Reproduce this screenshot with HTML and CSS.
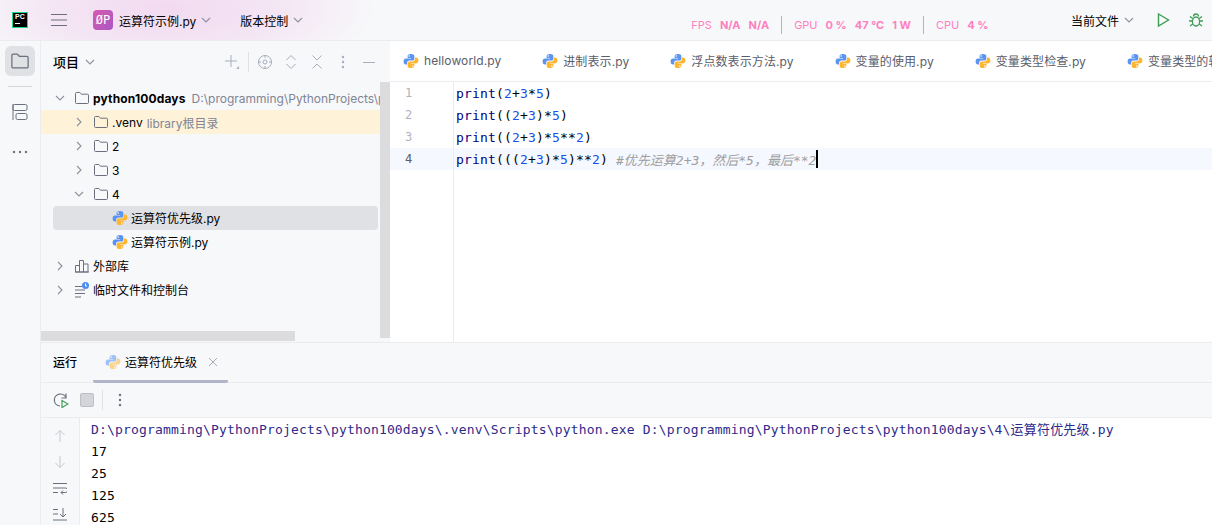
FILE: index.html
```html
<!DOCTYPE html>
<html lang="en">
<head>
  <meta charset="UTF-8" />
  <title>运算符示例.py</title>
  <link rel="stylesheet" href="styles.css">
</head>
<body>
  <svg class="defs" width="0" height="0">
    <symbol id="py" viewBox="0 0 16 16">
      <path fill="#5b94f0" d="M8 1C5.300 1 4.600 2 4.600 3.200V5h3.600v.6H2.900C1.500 5.600 .6 6.700 .6 8.400c0 1.800.9 3 2.300 3h1.200V9.700c0-1.200 1-2.200 2.200-2.200h3.200c1 0 1.800-.8 1.800-1.800V3.100C11.300 1.800 10.200 1 8 1z"/>
      <circle cx="6.200" cy="3" r=".8" fill="#fff"/>
      <path fill="#ffb62e" d="M8 15c2.700 0 3.400-1 3.400-2.200V11H7.800v-.6h5.300c1.400 0 2.300-1.100 2.300-2.800 0-1.800-.9-3-2.300-3h-1.200v1.700c0 1.200-1 2.200-2.200 2.200H6.500c-1 0-1.800.8-1.800 1.800v2.600C4.700 14.200 5.800 15 8 15z"/>
      <circle cx="9.800" cy="13" r=".8" fill="#fff"/>
    </symbol>
    <symbol id="folder" viewBox="0 0 16 16">
      <path fill="none" stroke="#6c707e" d="M1.500 3.500a1 1 0 0 1 1-1h3.300l1.700 1.700h6a1 1 0 0 1 1 1v7.300a1 1 0 0 1-1 1h-11a1 1 0 0 1-1-1z"/>
    </symbol>
    <symbol id="right" viewBox="0 0 10 10">
      <path fill="none" stroke="#8d919e" stroke-width="1.100" d="M3 1l4 4-4 4"/>
    </symbol>
    <symbol id="down" viewBox="0 0 10 10">
      <path fill="none" stroke="#8d919e" stroke-width="1.100" d="M1 3l4 4 4-4"/>
    </symbol>
  </svg>

  <header class="titlebar">
    <div class="logo"><span>PC</span><i></i></div>
    <svg class="burger" width="16" height="14" viewBox="0 0 16 14"><path stroke="#6c707e" d="M0 1.500h16M0 7h16M0 12.500h16"/></svg>
    <div class="badge">ØP</div>
    <span class="title-item">运算符示例.py</span>
    <svg class="chev" width="10" height="10"><use href="#down"/></svg>
    <span class="title-item vcs">版本控制</span>
    <svg class="chev" width="10" height="10"><use href="#down"/></svg>

    <div class="stats">
      <span>FPS</span><b>N/A</b><b>N/A</b><em></em>
      <span>GPU</span><b>0 %</b><b>47 °C</b><b>1 W</b><em></em>
      <span>CPU</span><b>4 %</b>
    </div>

    <div class="run-area">
      <span class="title-item">当前文件</span>
      <svg class="chev" width="10" height="10"><use href="#down"/></svg>
      <svg class="run-btn" width="16" height="16" viewBox="0 0 16 16"><path fill="none" stroke="#3f9c57" stroke-width="1.400" d="M3.500 2l10 6-10 6z"/></svg>
      <svg class="debug-btn" width="16" height="16" viewBox="0 0 16 16"><g fill="none" stroke="#3f9c57" stroke-width="1.300"><ellipse cx="8" cy="9.500" rx="3.600" ry="4.500"/><path d="M5.500 4.500a2.500 2.500 0 0 1 5 0M4.500 9H1M15 9h-3.500M4.800 12l-2.800 2M11.200 12l2.800 2M4.800 6.500L2 4.500M11.200 6.500L14 4.500"/></g></svg>
    </div>
  </header>

  <div class="main">
    <nav class="rail">
      <div class="rail-active"><svg width="20" height="20"><use href="#folder"/></svg></div>
      <div class="rail-sep"></div>
      <svg class="rail-icon" width="16" height="18" viewBox="0 0 16 18"><g fill="none" stroke="#6c707e"><path d="M1 1v16"/><rect x="1" y="1.500" width="14" height="6" rx="1.500"/><rect x="4" y="10.500" width="11" height="6" rx="1.500"/></g></svg>
      <svg class="rail-icon dots" width="16" height="4" viewBox="0 0 16 4"><g fill="#6c707e"><circle cx="2" cy="2" r="1.200"/><circle cx="8" cy="2" r="1.200"/><circle cx="14" cy="2" r="1.200"/></g></svg>
    </nav>

    <div class="workspace">
      <div class="upper">
        <section class="project">
          <div class="project-head">
            <span class="project-title">项目</span>
            <svg class="chev" width="10" height="10"><use href="#down"/></svg>
            <div class="project-tools">
              <svg width="16" height="16" viewBox="0 0 16 16"><path stroke="#a8adbd" fill="none" d="M7 1v12M1 7h12"/><path fill="#a8adbd" d="M15 12v3h-3z"/></svg>
              <i class="tool-sep"></i>
              <svg width="16" height="16" viewBox="0 0 16 16"><g stroke="#a8adbd" fill="none"><circle cx="8" cy="8" r="6.500"/><circle cx="8" cy="8" r="2"/><path d="M8 1v3M8 12v3M1 8h3M12 8h3"/></g></svg>
              <svg width="16" height="16" viewBox="0 0 16 16"><path stroke="#a8adbd" fill="none" d="M3.500 6L8 1.500 12.500 6M3.500 10L8 14.500 12.500 10"/></svg>
              <svg width="16" height="16" viewBox="0 0 16 16"><path stroke="#a8adbd" fill="none" d="M3.500 1.500L8 6l4.500-4.500M3.500 14.500L8 10l4.500 4.500"/></svg>
              <svg width="16" height="16" viewBox="0 0 16 16"><g fill="#a8adbd"><circle cx="8" cy="3" r="1.200"/><circle cx="8" cy="8" r="1.200"/><circle cx="8" cy="13" r="1.200"/></g></svg>
              <svg width="16" height="16" viewBox="0 0 16 16"><path stroke="#a8adbd" d="M2 8.500h12"/></svg>
            </div>
          </div>

          <div class="tree">
            <div class="row lvl0">
              <svg class="arrow" width="10" height="10"><use href="#down"/></svg>
              <svg class="icon" width="16" height="16"><use href="#folder"/></svg>
              <b class="root-name">python100days</b><span class="hint">D:\programming\PythonProjects\python100days</span>
            </div>
            <div class="row lvl1 library">
              <svg class="arrow" width="10" height="10"><use href="#right"/></svg>
              <svg class="icon" width="16" height="16"><use href="#folder"/></svg>
              <span>.venv</span><span class="hint">library根目录</span>
            </div>
            <div class="row lvl1">
              <svg class="arrow" width="10" height="10"><use href="#right"/></svg>
              <svg class="icon" width="16" height="16"><use href="#folder"/></svg>
              <span>2</span>
            </div>
            <div class="row lvl1">
              <svg class="arrow" width="10" height="10"><use href="#right"/></svg>
              <svg class="icon" width="16" height="16"><use href="#folder"/></svg>
              <span>3</span>
            </div>
            <div class="row lvl1">
              <svg class="arrow" width="10" height="10"><use href="#down"/></svg>
              <svg class="icon" width="16" height="16"><use href="#folder"/></svg>
              <span>4</span>
            </div>
            <div class="row lvl2 selected">
              <svg class="icon" width="16" height="16"><use href="#py"/></svg>
              <span class="cjk">运算符优先级.py</span>
            </div>
            <div class="row lvl2">
              <svg class="icon" width="16" height="16"><use href="#py"/></svg>
              <span class="cjk">运算符示例.py</span>
            </div>
            <div class="row lvl0">
              <svg class="arrow" width="10" height="10"><use href="#right"/></svg>
              <svg class="icon" width="16" height="16" viewBox="0 0 16 16"><path fill="none" stroke="#6c707e" d="M1.500 14V7.500h4V14zM5.500 14V2.500h4V14zM9.500 14V6h4.500v8zM1 14h14"/></svg>
              <span class="cjk">外部库</span>
            </div>
            <div class="row lvl0">
              <svg class="arrow" width="10" height="10"><use href="#right"/></svg>
              <svg class="icon" width="16" height="16" viewBox="0 0 16 16"><path stroke="#6c707e" d="M1 4.500h7M1 8h10M1 11.500h10M1 15h6"/><circle cx="11.500" cy="3.500" r="3.500" fill="#4d8cf5"/><path stroke="#fff" d="M11.500 1.500v2.500h1.500" fill="none"/></svg>
              <span class="cjk">临时文件和控制台</span>
            </div>
          </div>
          <div class="vscroll"></div>
          <div class="hscroll"></div>
        </section>

        <section class="editor">
          <div class="tabs">
            <div class="tab"><svg width="16" height="16"><use href="#py"/></svg>helloworld.py</div>
            <div class="tab"><svg width="16" height="16"><use href="#py"/></svg>进制表示.py</div>
            <div class="tab"><svg width="16" height="16"><use href="#py"/></svg>浮点数表示方法.py</div>
            <div class="tab"><svg width="16" height="16"><use href="#py"/></svg>变量的使用.py</div>
            <div class="tab"><svg width="16" height="16"><use href="#py"/></svg>变量类型检查.py</div>
            <div class="tab"><svg width="16" height="16"><use href="#py"/></svg>变量类型的转换.py</div>
          </div>
          <div class="code">
            <div class="line"><span class="num">1</span><code><s>print</s>(<u>2</u>+<u>3</u>*<u>5</u>)</code></div>
            <div class="line"><span class="num">2</span><code><s>print</s>((<u>2</u>+<u>3</u>)*<u>5</u>)</code></div>
            <div class="line"><span class="num">3</span><code><s>print</s>((<u>2</u>+<u>3</u>)*<u>5</u>**<u>2</u>)</code></div>
            <div class="line current"><span class="num">4</span><code><s>print</s>(((<u>2</u>+<u>3</u>)*<u>5</u>)**<u>2</u>) <i>#优先运算2+3，然后*5，最后**2</i><span class="caret"></span></code></div>
            <div class="gutter-rest"></div>
          </div>
        </section>
      </div>

      <section class="run-panel">
        <div class="run-head">
          <span class="run-label">运行</span>
          <div class="run-tab">
            <svg class="faded" width="16" height="16"><use href="#py"/></svg>
            <span>运算符优先级</span>
            <svg width="10" height="10" viewBox="0 0 10 10"><path stroke="#a8adbd" d="M1 1l8 8M9 1l-8 8"/></svg>
          </div>
        </div>
        <div class="run-tools">
          <svg width="16" height="16" viewBox="0 0 16 16"><path fill="none" stroke="#6c707e" stroke-width="1.200" d="M7 14A6 6 0 1 1 13 6M13 1.500V6H8.500"/><path fill="#fff" stroke="#3f9c57" stroke-width="1.200" d="M9 8.500l6 3.500-6 3.500z"/></svg>
          <div class="stop"></div>
          <i class="tool-sep"></i>
          <svg width="16" height="16" viewBox="0 0 16 16"><g fill="#6c707e"><circle cx="8" cy="3" r="1.200"/><circle cx="8" cy="8" r="1.200"/><circle cx="8" cy="13" r="1.200"/></g></svg>
        </div>
        <div class="console-wrap">
          <div class="console-side">
            <svg width="14" height="14" viewBox="0 0 14 14"><path fill="none" stroke="#c4c7d0" d="M7 13V1.500M2.500 6L7 1.500 11.500 6"/></svg>
            <svg width="14" height="14" viewBox="0 0 14 14"><path fill="none" stroke="#c4c7d0" d="M7 1v11.500M2.500 8L7 12.500 11.500 8"/></svg>
            <svg width="14" height="14" viewBox="0 0 14 14"><path fill="none" stroke="#6c707e" d="M0 2.500h14M0 7h12.500a2 2 0 0 1 0 4.500H8M10 9.500l-2 2 2 2M0 11.500h5"/></svg>
            <svg width="14" height="14" viewBox="0 0 14 14"><path fill="none" stroke="#6c707e" d="M0 2.500h5M0 7h5M0 13h14M10 1v9M7 7l3 3 3-3"/></svg>
          </div>
          <pre class="console"><span class="cmd">D:\programming\PythonProjects\python100days\.venv\Scripts\python.exe D:\programming\PythonProjects\python100days\4\运算符优先级.py</span>
17
25
125
625</pre>
        </div>
      </section>
    </div>
  </div>
</body>
</html>
```

FILE: styles.css
```css
/* IDE window */
html, body {
  height: 100%;
}
body {
  margin: 0;
  display: flex;
  flex-direction: column;
  overflow: hidden;
  background-color: #fff;
  color: #000;
  font-family: Inter, "Noto Sans CJK SC", sans-serif;
  font-size: 13px;
}
.defs {
  position: absolute;
}
svg {
  display: block;
  flex: none;
}

/* title bar */
.titlebar {
  height: 41px;
  flex: none;
  display: flex;
  align-items: center;
  box-sizing: border-box;
  padding-left: 12px;
  border-bottom: 1px solid #ebecf0;
  background: radial-gradient(ellipse 210px 70px at 165px 10px, #f2daf1 0%, #f4e6f4 55%, rgba(247, 248, 250, 0) 100%), #f7f8fa;
}
.logo {
  width: 16px;
  height: 16px;
  box-sizing: border-box;
  border: 1px solid #21d789;
  background-color: #000;
  color: #fff;
  font-family: "Liberation Sans", sans-serif;
  font-size: 7px;
  font-weight: bold;
  line-height: 8px;
  padding-left: 2px;
}
.logo span {
  display: block;
}
.logo i {
  display: block;
  width: 5px;
  height: 1px;
  margin-top: 2px;
  background-color: #fff;
}
.burger {
  margin-left: 23px;
}
.badge {
  width: 20px;
  height: 20px;
  margin-left: 26px;
  border-radius: 4px;
  background: linear-gradient(135deg, #d65ab0, #a957c4);
  color: #fff;
  font-family: "DejaVu Sans Mono", monospace;
  font-size: 12px;
  line-height: 20px;
  text-align: center;
}
.title-item {
  font-size: 12px;
  margin-left: 6px;
}
.title-item.vcs {
  margin-left: 29px;
}
.chev {
  margin-left: 5px;
}
.stats {
  display: flex;
  align-items: center;
  margin-left: 388px;
  margin-top: 10px;
  gap: 8px;
  color: #ff7fbf;
  font-size: 11px;
  height: 18px;
}
.stats b {
  font-weight: 700;
}
.stats em {
  width: 1px;
  height: 18px;
  margin: 0 4px;
  background-color: #ff8cc6;
}
.run-area {
  display: flex;
  align-items: center;
  margin-left: auto;
  padding-right: 8px;
}
.run-btn {
  margin-left: 21px;
}
.debug-btn {
  margin-left: 17px;
}

/* main area */
.main {
  flex: 1;
  min-height: 0;
  display: flex;
}
.rail {
  width: 41px;
  flex: none;
  box-sizing: border-box;
  border-right: 1px solid #ebecf0;
  background-color: #f7f8fa;
  display: flex;
  flex-direction: column;
  align-items: center;
  padding-top: 5px;
}
.rail-active {
  width: 30px;
  height: 30px;
  border-radius: 6px;
  background-color: #dfe1e5;
  display: flex;
  align-items: center;
  justify-content: center;
}
.rail-sep {
  width: 24px;
  height: 1px;
  margin-top: 10px;
  background-color: #d3d5db;
}
.rail-icon {
  margin-top: 16px;
}
.rail-icon.dots {
  margin-top: 29px;
}
.workspace {
  flex: 1;
  min-width: 0;
  display: flex;
  flex-direction: column;
}
.upper {
  height: 301px;
  flex: none;
  display: flex;
}

/* project tree */
.project {
  position: relative;
  width: 349px;
  flex: none;
  background-color: #f7f8fa;
  overflow: hidden;
}
.project-head {
  height: 41px;
  display: flex;
  align-items: center;
  padding-left: 12px;
}
.project-title {
  font-weight: 500;
}
.project-head .chev {
  margin-left: 6px;
}
.project-tools {
  display: flex;
  align-items: center;
  gap: 10px;
  margin-left: auto;
  padding-right: 13px;
}
.tool-sep {
  width: 1px;
  height: 20px;
  margin: 0 -2px;
  background-color: #dfe1e5;
}
.tree {
  padding-top: 4px;
}
.row {
  height: 24px;
  display: flex;
  align-items: center;
  white-space: nowrap;
  font-size: 12px;
  box-sizing: border-box;
}
.row .arrow {
  margin-right: 9px;
}
.row .icon {
  margin-right: 3px;
}
.row .cjk {
  margin-bottom: 2px;
}
.lvl0 {
  padding-left: 14px;
}
.lvl1 {
  padding-left: 33px;
}
.lvl2 {
  padding-left: 71px;
}
.library {
  background-color: #fef3d9;
}
.selected {
  background-color: #dfe1e5;
  border-radius: 4px;
  margin: 0 12px;
  padding-left: 59px;
}
.root-name {
  font-weight: 700;
  letter-spacing: .15px;
}
.hint {
  color: #818594;
  margin-left: 6px;
}
.library .hint {
  margin-left: 4px;
}
.vscroll {
  position: absolute;
  top: 41px;
  right: 0;
  bottom: 4px;
  width: 10px;
  background-color: #dcdcde;
}
.hscroll {
  position: absolute;
  left: 0;
  bottom: 1px;
  width: 254px;
  height: 10px;
  background-color: #dcdcde;
}

/* editor */
.editor {
  flex: 1;
  min-width: 0;
  display: flex;
  flex-direction: column;
  overflow: hidden;
}
.tabs {
  height: 41px;
  flex: none;
  display: flex;
  align-items: center;
  box-sizing: border-box;
  border-bottom: 1px solid #ebecf0;
  padding-left: 13px;
  gap: 41px;
  white-space: nowrap;
  color: #5a5d6b;
  font-size: 12px;
  letter-spacing: .1px;
}
.tab {
  display: flex;
  align-items: center;
  gap: 5px;
  padding-bottom: 2px;
}
.tab svg {
  margin-top: 2px;
}
.code {
  flex: 1;
  display: flex;
  flex-direction: column;
  font-family: "DejaVu Sans Mono", "Noto Sans CJK SC", monospace;
  font-size: 13px;
}
.line {
  height: 22px;
  display: flex;
  align-items: center;
}
.line.current {
  background-color: #f5f8fe;
}
.num {
  width: 64px;
  flex: none;
  box-sizing: border-box;
  padding-left: 15px;
  height: 100%;
  line-height: 22px;
  border-right: 1px solid #ebecf0;
  color: #aeb3c2;
  font-size: 12px;
}
.current .num {
  color: #5a5d6b;
}
.line code {
  font: inherit;
  margin-left: 2px;
  letter-spacing: .17px;
  white-space: pre;
  display: flex;
  align-items: center;
}
.line s {
  text-decoration: none;
  color: #000080;
}
.line u {
  text-decoration: none;
  color: #1750eb;
}
.line i {
  color: #9e9e9e;
  letter-spacing: 0;
}
.caret {
  width: 2px;
  height: 18px;
  background-color: #000;
}
.gutter-rest {
  flex: 1;
  width: 64px;
  box-sizing: border-box;
  border-right: 1px solid #ebecf0;
}

/* run tool window */
.run-panel {
  flex: 1;
  min-height: 0;
  display: flex;
  flex-direction: column;
  border-top: 1px solid #ebecf0;
  background-color: #f7f8fa;
}
.run-head {
  height: 40px;
  flex: none;
  box-sizing: border-box;
  display: flex;
  padding-left: 12px;
  border-bottom: 1px solid #ebecf0;
}
.run-label {
  line-height: 39px;
  font-size: 12px;
  font-weight: 500;
  margin-right: 16px;
}
.run-tab {
  display: flex;
  align-items: center;
  gap: 4px;
  padding: 0 10px 0 12px;
  height: 40px;
  box-sizing: border-box;
  font-size: 12px;
  border-bottom: 3px solid #b0b5c7;
  border-radius: 0 0 2px 2px;
}
.run-tab .faded {
  opacity: .55;
}
.run-tab span {
  margin-right: 7px;
}
.run-tools {
  height: 35px;
  flex: none;
  display: flex;
  align-items: center;
  gap: 8px;
  padding-left: 12px;
  box-sizing: border-box;
  border-bottom: 1px solid #ebecf0;
}
.run-tools .tool-sep {
  margin: 0 1px 0 0;
}
.stop {
  width: 12px;
  height: 12px;
  margin-left: 3px;
  border-radius: 2px;
  border: 1px solid #bcbec4;
  background-color: #d3d5db;
}
.console-wrap {
  flex: 1;
  min-height: 0;
  display: flex;
  background-color: #fff;
}
.console-side {
  width: 39px;
  flex: none;
  box-sizing: border-box;
  background-color: #f7f8fa;
  border-right: 1px solid #ebecf0;
  display: flex;
  flex-direction: column;
  align-items: center;
  gap: 12px;
  padding-top: 11px;
}
.console {
  margin: 0;
  padding: 1px 0 0 11px;
  white-space: pre;
  font-family: "DejaVu Sans Mono", "Noto Sans CJK SC", monospace;
  font-size: 13px;
  letter-spacing: .17px;
  line-height: 22px;
  color: #000;
}
.cmd {
  color: #2d2a8a;
}
```
